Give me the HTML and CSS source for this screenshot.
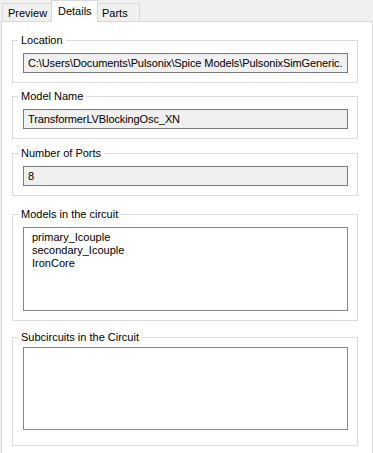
FILE: index.html
```html
<!DOCTYPE html>
<html lang="en">
<head>
    <meta charset="UTF-8">
    <meta name="viewport" content="width=device-width, initial-scale=1.0">
    <title>Details</title>
    <link rel="stylesheet" href="styles.css">
</head>
<body>
    <div class="tabs">
        <div class="tab first">Preview</div>
        <div class="tab active">Details</div>
        <div class="tab last">Parts</div>
    </div>

    <div class="panel">
        <fieldset class="group">
            <legend>Location</legend>
            <div class="field">C:\Users\Documents\Pulsonix\Spice Models\PulsonixSimGeneric.</div>
        </fieldset>

        <fieldset class="group model">
            <legend>Model Name</legend>
            <div class="field">TransformerLVBlockingOsc_XN</div>
        </fieldset>

        <fieldset class="group ports">
            <legend>Number of Ports</legend>
            <div class="field">8</div>
        </fieldset>

        <fieldset class="group models">
            <legend>Models in the circuit</legend>
            <div class="list">
                <div class="item">primary_Icouple</div>
                <div class="item">secondary_Icouple</div>
                <div class="item">IronCore</div>
            </div>
        </fieldset>

        <fieldset class="group subs">
            <legend>Subcircuits in the Circuit</legend>
            <div class="list"></div>
        </fieldset>
    </div>
</body>
</html>
```

FILE: styles.css
```css
body {
    margin: 0;
    background-color: #F0F0F0; /* window gray */
    font-family: "Liberation Sans", Arial, sans-serif;
    font-size: 11px;
    color: #000000;
    overflow: hidden;
}
.tabs {
    display: flex;
    align-items: flex-end;
    height: 22px;
    padding-left: 2px;
    margin-bottom: -1px;
    position: relative;
    z-index: 1;
}
.tab {
    box-sizing: border-box;
    height: 18px;
    margin-bottom: 1px;
    padding-top: 1px;
    line-height: 16px;
    background-color: #F0F0F0;
    border: 1px solid #D9D9D9;
    border-bottom: none;
}
.tab.first {
    width: 49px;
    padding-left: 5px;
    border-right: none;
}
.tab.active {
    width: 47px;
    height: 22px;
    margin-bottom: 0;
    padding-top: 2px;
    padding-left: 6px;
    background-color: #FFFFFF;
}
.tab.last {
    width: 42px;
    padding-left: 4px;
    border-left: none;
}
.panel {
    width: 372px;
    height: 460px;
    margin-left: 1px;
    padding: 12px 14px 0 10px;
    box-sizing: border-box;
    background-color: #FFFFFF;
    border: 1px solid #D9D9D9;
}
.group {
    margin: 0;
    padding: 6px 9px 9px 10px;
    min-width: 0;
    border: 1px solid #DCDCDC;
}
.group legend {
    margin-left: -5px;
    padding: 0 3px;
    line-height: 13px;
}
.group.model {
    margin-top: 7px;
}
.group.ports {
    margin-top: 8px;
}
.group.models {
    margin-top: 12px;
}
.group.subs {
    margin-top: 10px;
    padding-top: 3px;
    padding-bottom: 15px;
}
.field {
    box-sizing: border-box;
    height: 20px;
    padding: 0 4px;
    line-height: 18px;
    letter-spacing: -0.1px;
    background-color: #F0F0F0;
    border: 1px solid #7A7A7A;
    white-space: nowrap;
    overflow: hidden;
}
.list {
    box-sizing: border-box;
    height: 83px;
    padding: 3px 8px;
    background-color: #FFFFFF;
    border: 1px solid #828790;
}
.group.models .list {
    height: 84px;
}
.item {
    line-height: 13px;
}
```
